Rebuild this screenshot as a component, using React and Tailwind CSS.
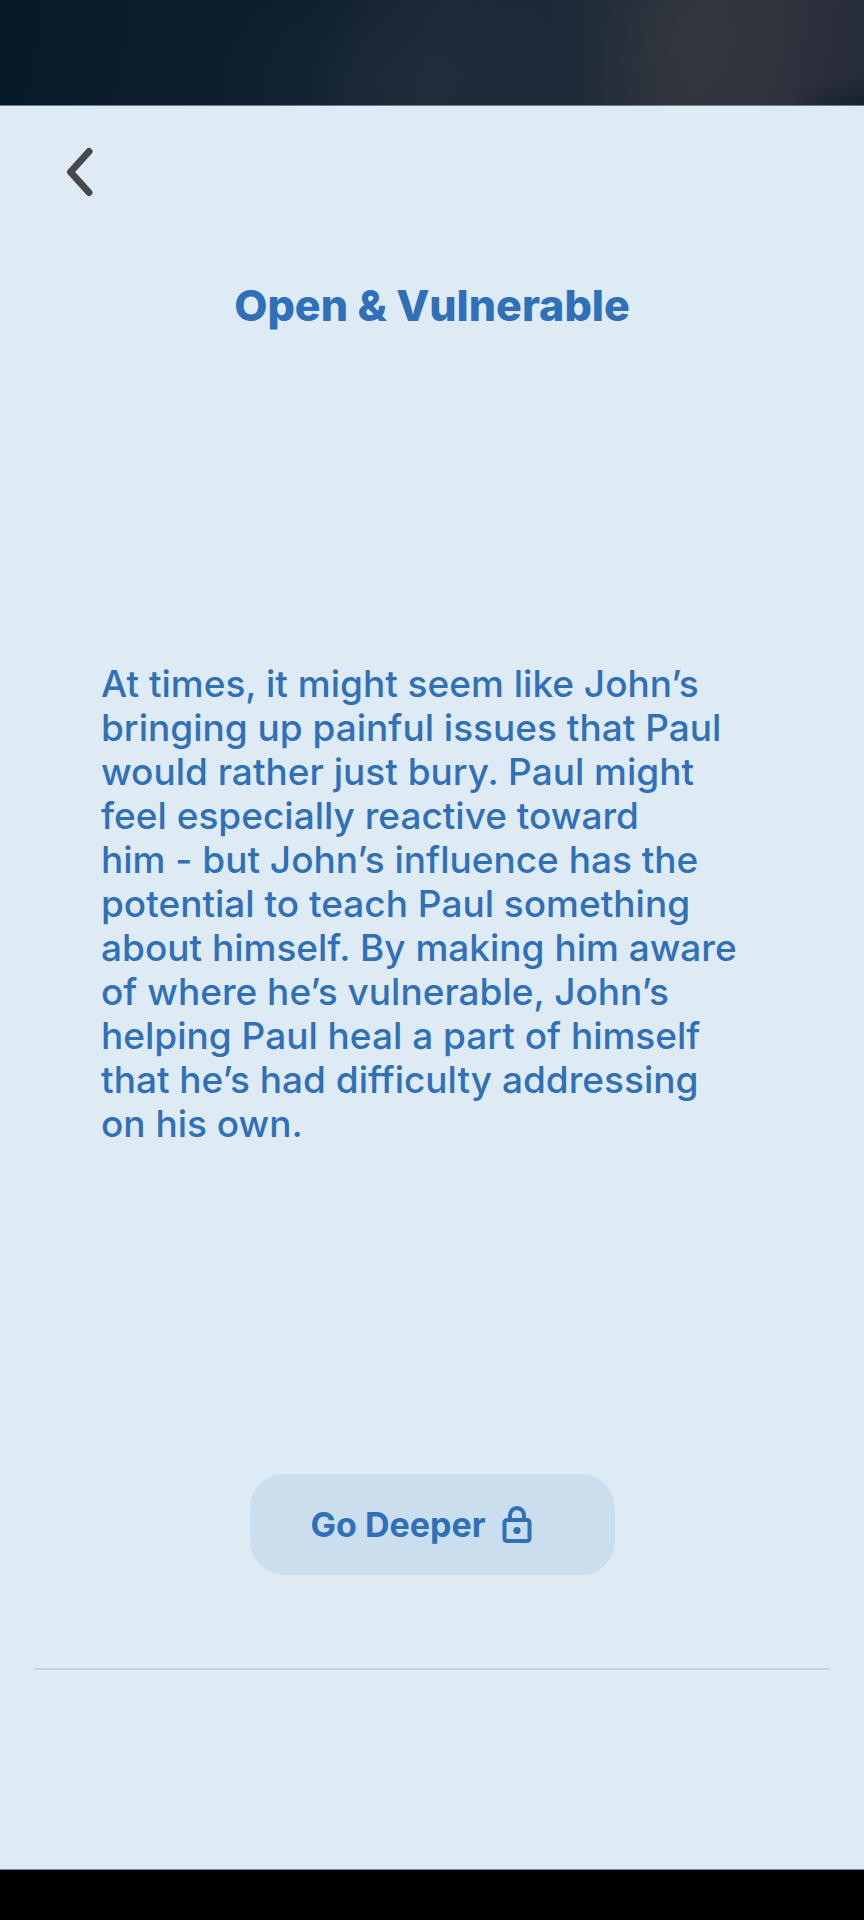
import React from "react";

const READING = {
  title: "Open & Vulnerable",
  lines: [
    "At times, it might seem like John’s",
    "bringing up painful issues that Paul",
    "would rather just bury. Paul might",
    "feel especially reactive toward",
    "him - but John’s influence has the",
    "potential to teach Paul something",
    "about himself. By making him aware",
    "of where he’s vulnerable, John’s",
    "helping Paul heal a part of himself",
    "that he’s had difficulty addressing",
    "on his own.",
  ],
};

function BackIcon() {
  return (
    <svg width="28" height="50" viewBox="0 0 28 50" fill="none" aria-hidden="true">
      <path
        d="M23 4.5 4.5 25 23 45.5"
        stroke="#484848"
        strokeWidth="7"
        strokeLinecap="round"
        strokeLinejoin="round"
      />
    </svg>
  );
}

function LockIcon() {
  return (
    <svg width="30" height="38" viewBox="0 0 30 38" fill="none" aria-hidden="true">
      <rect x="2.5" y="14" width="25" height="21" rx="2.5" stroke="currentColor" strokeWidth="4" />
      <path d="M8 14V9.500a7 7.500 0 0 1 14 0V14" stroke="currentColor" strokeWidth="4" />
      <circle cx="15" cy="24.5" r="3.6" fill="currentColor" />
    </svg>
  );
}

// Night sky strip above the sheet
function SkyBanner() {
  return (
    <header className="relative h-[106px] shrink-0 overflow-hidden border-b border-[#6f7c88] bg-[linear-gradient(100deg,#061a29_0%,#0d1c2c_20%,#0f1e2e_36%,#1b2836_50%,#1e2a37_68%,#2e323b_80%,#2e313c_90%,#252c39_100%)]">
      <div className="absolute inset-0 bg-[radial-gradient(200px_120px_at_44%_75%,rgba(60,75,88,0.16),transparent),radial-gradient(130px_150px_at_79%_35%,rgba(80,84,86,0.18),transparent),radial-gradient(80px_30px_at_100%_100%,rgba(12,28,42,0.6),transparent)]" />
    </header>
  );
}

export default function App() {
  return (
    <div className="flex min-h-screen flex-col bg-[#deebf4] font-['Inter',sans-serif] text-[#2f70b8]">
      <SkyBanner />

      <main className="flex flex-1 flex-col">
        <nav className="px-[66px] pt-[41px]">
          <button type="button" aria-label="Back" className="block cursor-pointer">
            <BackIcon />
          </button>
        </nav>

        <h1 className="mt-[83px] text-center text-[43px] leading-[50px] font-extrabold">
          {READING.title}
        </h1>

        <div className="flex flex-1 items-center px-[101px] pt-1">
          <p className="text-[37px] leading-[44px] font-medium">
            {READING.lines.map((line) => (
              <span key={line} className="block whitespace-nowrap">
                {line}
              </span>
            ))}
          </p>
        </div>

        <div className="flex justify-center">
          <button
            type="button"
            className="flex h-[101px] w-[365px] cursor-pointer items-center gap-4 rounded-[34px] bg-[#cbdeed] pl-[61px] text-[34px] leading-[44px] font-bold"
          >
            Go Deeper
            <LockIcon />
          </button>
        </div>

        <hr className="mx-[34px] mt-[93px] mb-[199px] border-t-2 border-[#cad3d6]" />
      </main>

      <footer className="h-[51px] shrink-0 border-t border-[#74838b] bg-black" />
    </div>
  );
}
